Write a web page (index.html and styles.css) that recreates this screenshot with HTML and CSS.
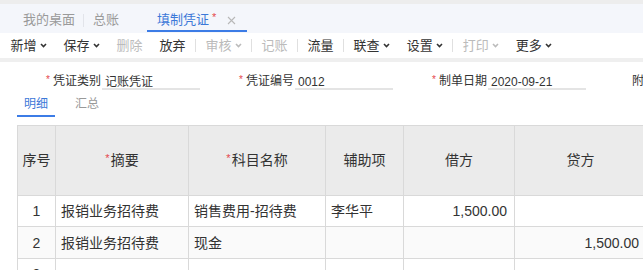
FILE: index.html
```html
<!DOCTYPE html>
<html>
<head>
<meta charset="utf-8">
<title>填制凭证</title>
<link rel="stylesheet" href="styles.css">
</head>
<body>

<div class="strip"></div>
<div class="tabbar">
    <div class="tab first">我的桌面</div>
    <div class="tab">总账</div>
    <div class="tab active">填制凭证<span class="dot">*</span>
        <svg class="close" width="9" height="9" viewBox="0 0 9 9"><path d="M1 1L8 8M8 1L1 8" stroke="#b8b8b8" stroke-width="1.1" fill="none"/></svg>
    </div>
</div>

<div class="toolbar">
    <span class="btn">新增<svg class="caret" width="7" height="5" viewBox="0 0 7 5"><path d="M1 1L3.5 3.5L6 1" /></svg></span>
    <span class="btn">保存<svg class="caret" width="7" height="5" viewBox="0 0 7 5"><path d="M1 1L3.5 3.5L6 1" /></svg></span>
    <span class="btn off">删除</span>
    <span class="btn">放弃</span>
    <i class="sep"></i>
    <span class="btn off">审核<svg class="caret" width="7" height="5" viewBox="0 0 7 5"><path d="M1 1L3.5 3.5L6 1" /></svg></span>
    <i class="sep"></i>
    <span class="btn off">记账</span>
    <i class="sep"></i>
    <span class="btn">流量</span>
    <i class="sep"></i>
    <span class="btn">联查<svg class="caret" width="7" height="5" viewBox="0 0 7 5"><path d="M1 1L3.5 3.5L6 1" /></svg></span>
    <span class="btn">设置<svg class="caret" width="7" height="5" viewBox="0 0 7 5"><path d="M1 1L3.5 3.5L6 1" /></svg></span>
    <i class="sep"></i>
    <span class="btn off">打印<svg class="caret" width="7" height="5" viewBox="0 0 7 5"><path d="M1 1L3.5 3.5L6 1" /></svg></span>
    <span class="btn">更多<svg class="caret" width="7" height="5" viewBox="0 0 7 5"><path d="M1 1L3.5 3.5L6 1" /></svg></span>
</div>
<div class="band"></div>

<div class="form">
    <div class="field"><span class="req">*</span><label>凭证类别</label><span class="input">记账凭证</span></div>
    <div class="field"><span class="req">*</span><label>凭证编号</label><span class="input">0012</span></div>
    <div class="field"><span class="req">*</span><label>制单日期</label><span class="input">2020-09-21</span></div>
    <div class="field"><span class="req"></span><label>附单据数</label><span class="input"></span></div>
</div>

<div class="subtabs">
    <span class="sub on">明细</span>
    <span class="sub">汇总</span>
</div>

<table class="grid">
    <colgroup>
        <col class="c-no"><col class="c-sum"><col class="c-acct"><col class="c-aux"><col class="c-dr"><col class="c-cr">
    </colgroup>
    <thead>
        <tr>
            <th>序号</th>
            <th><span class="star">*</span>摘要</th>
            <th><span class="star">*</span>科目名称</th>
            <th>辅助项</th>
            <th>借方</th>
            <th>贷方</th>
        </tr>
    </thead>
    <tbody>
        <tr>
            <td class="no">1</td>
            <td>报销业务招待费</td>
            <td>销售费用-招待费</td>
            <td>李华平</td>
            <td class="num">1,500.00</td>
            <td class="num"></td>
        </tr>
        <tr class="alt">
            <td class="no">2</td>
            <td>报销业务招待费</td>
            <td>现金</td>
            <td></td>
            <td class="num"></td>
            <td class="num">1,500.00</td>
        </tr>
        <tr>
            <td class="no">3</td>
            <td></td><td></td><td></td><td></td><td></td>
        </tr>
    </tbody>
</table>

</body>
</html>
```
FILE: styles.css
```css
html, body { margin: 0; padding: 0; width: 643px; height: 270px; overflow: hidden; background-color: #FFF; color: #333; font: normal 13px/1.4 "Liberation Sans", "Noto Sans CJK SC", sans-serif; }

.strip { height: 4px; background-color: #EDEDED; }
.band  { height: 4px; background-color: #EFEFEF; }

/* top tabs */
.tabbar { display: flex; height: 29px; padding-left: 14px; background-color: #F4F6FB; box-sizing: border-box; }
.tab { display: flex; align-items: center; box-sizing: border-box; height: 28px; padding: 4px 9px 0; color: #9A9A9A; font-size: 13px; line-height: 20px; }
.tab.first { position: relative; }
.tab.first::after { content: ""; position: absolute; right: 0; top: 10px; width: 1px; height: 13px; background-color: #E2E4EA; }
.tab.active { margin-left: 19px; width: 100px; padding-left: 10px; color: #3C78D8; border-bottom: 2px solid #3C7CE6; padding-top: 6px; }
.dot { color: #E5484D; font-size: 11px; margin: -7px 0 0 3px; }
.close { margin-left: 11px; }

/* toolbar */
.toolbar { display: flex; align-items: center; height: 25px; padding-left: 2px; }
.btn { display: flex; align-items: center; padding: 0 8.5px; line-height: 20px; color: #333; white-space: nowrap; }
.btn.off { color: #BBB; }
.caret { margin-left: 3px; fill: none; stroke: #333; stroke-width: 1.6; }
.btn.off .caret { stroke: #BBB; }
.sep { display: block; width: 1px; height: 13px; margin: 0 1px; background-color: #E0E0E0; }

/* header form */
.form { display: flex; padding: 7px 0 0 46px; height: 33px; box-sizing: border-box; font-size: 12px; }
.field { display: flex; align-items: center; flex: none; width: 193px; height: 24px; }
.req { width: 7px; color: #E5484D; font-size: 10px; margin-top: -3px; }
.field label { width: 49px; color: #333; }
.input { width: 98px; height: 16px; line-height: 16px; padding-left: 3px; box-sizing: border-box; width: 98px; margin-top: 2px; border-bottom: 2px solid #E4E4E4; color: #333; white-space: nowrap; }

/* detail tabs */
.subtabs { display: flex; gap: 13px; padding-left: 17px; height: 22px; margin-bottom: 8px; font-size: 12px; }
.sub { box-sizing: border-box; width: 38px; height: 22px; line-height: 18px; text-align: center; color: #999; }
.sub.on { color: #3C78D8; border-bottom: 2px solid #3C7CE6; }

/* grid */
.grid { margin-left: 17px; border-collapse: collapse; table-layout: fixed; width: 629px; font-size: 14px; color: #333; }
.c-no   { width: 38px; }
.c-sum  { width: 133px; }
.c-acct { width: 137px; }
.c-aux  { width: 78px; }
.c-dr   { width: 111px; }
.c-cr   { width: 132px; }
.grid th, .grid td { border: 1px solid #D9D9D9; white-space: nowrap; overflow: hidden; }
.grid th { height: 69px; padding: 0; background-color: #EBEBEB; font-weight: normal; text-align: center; }
.grid td { height: 30px; padding: 0 6px 0 5px; line-height: 20px; }
.grid tbody tr:nth-child(2) td { height: 31px; }
.grid td.no { text-align: center; padding: 0; }
.grid td.num { text-align: right; padding-right: 7px; }
.grid tr.alt td { background-color: #FAFAFA; }
.star { color: #E5484D; font-size: 11px; vertical-align: 3px; margin-right: 1px; }
```
